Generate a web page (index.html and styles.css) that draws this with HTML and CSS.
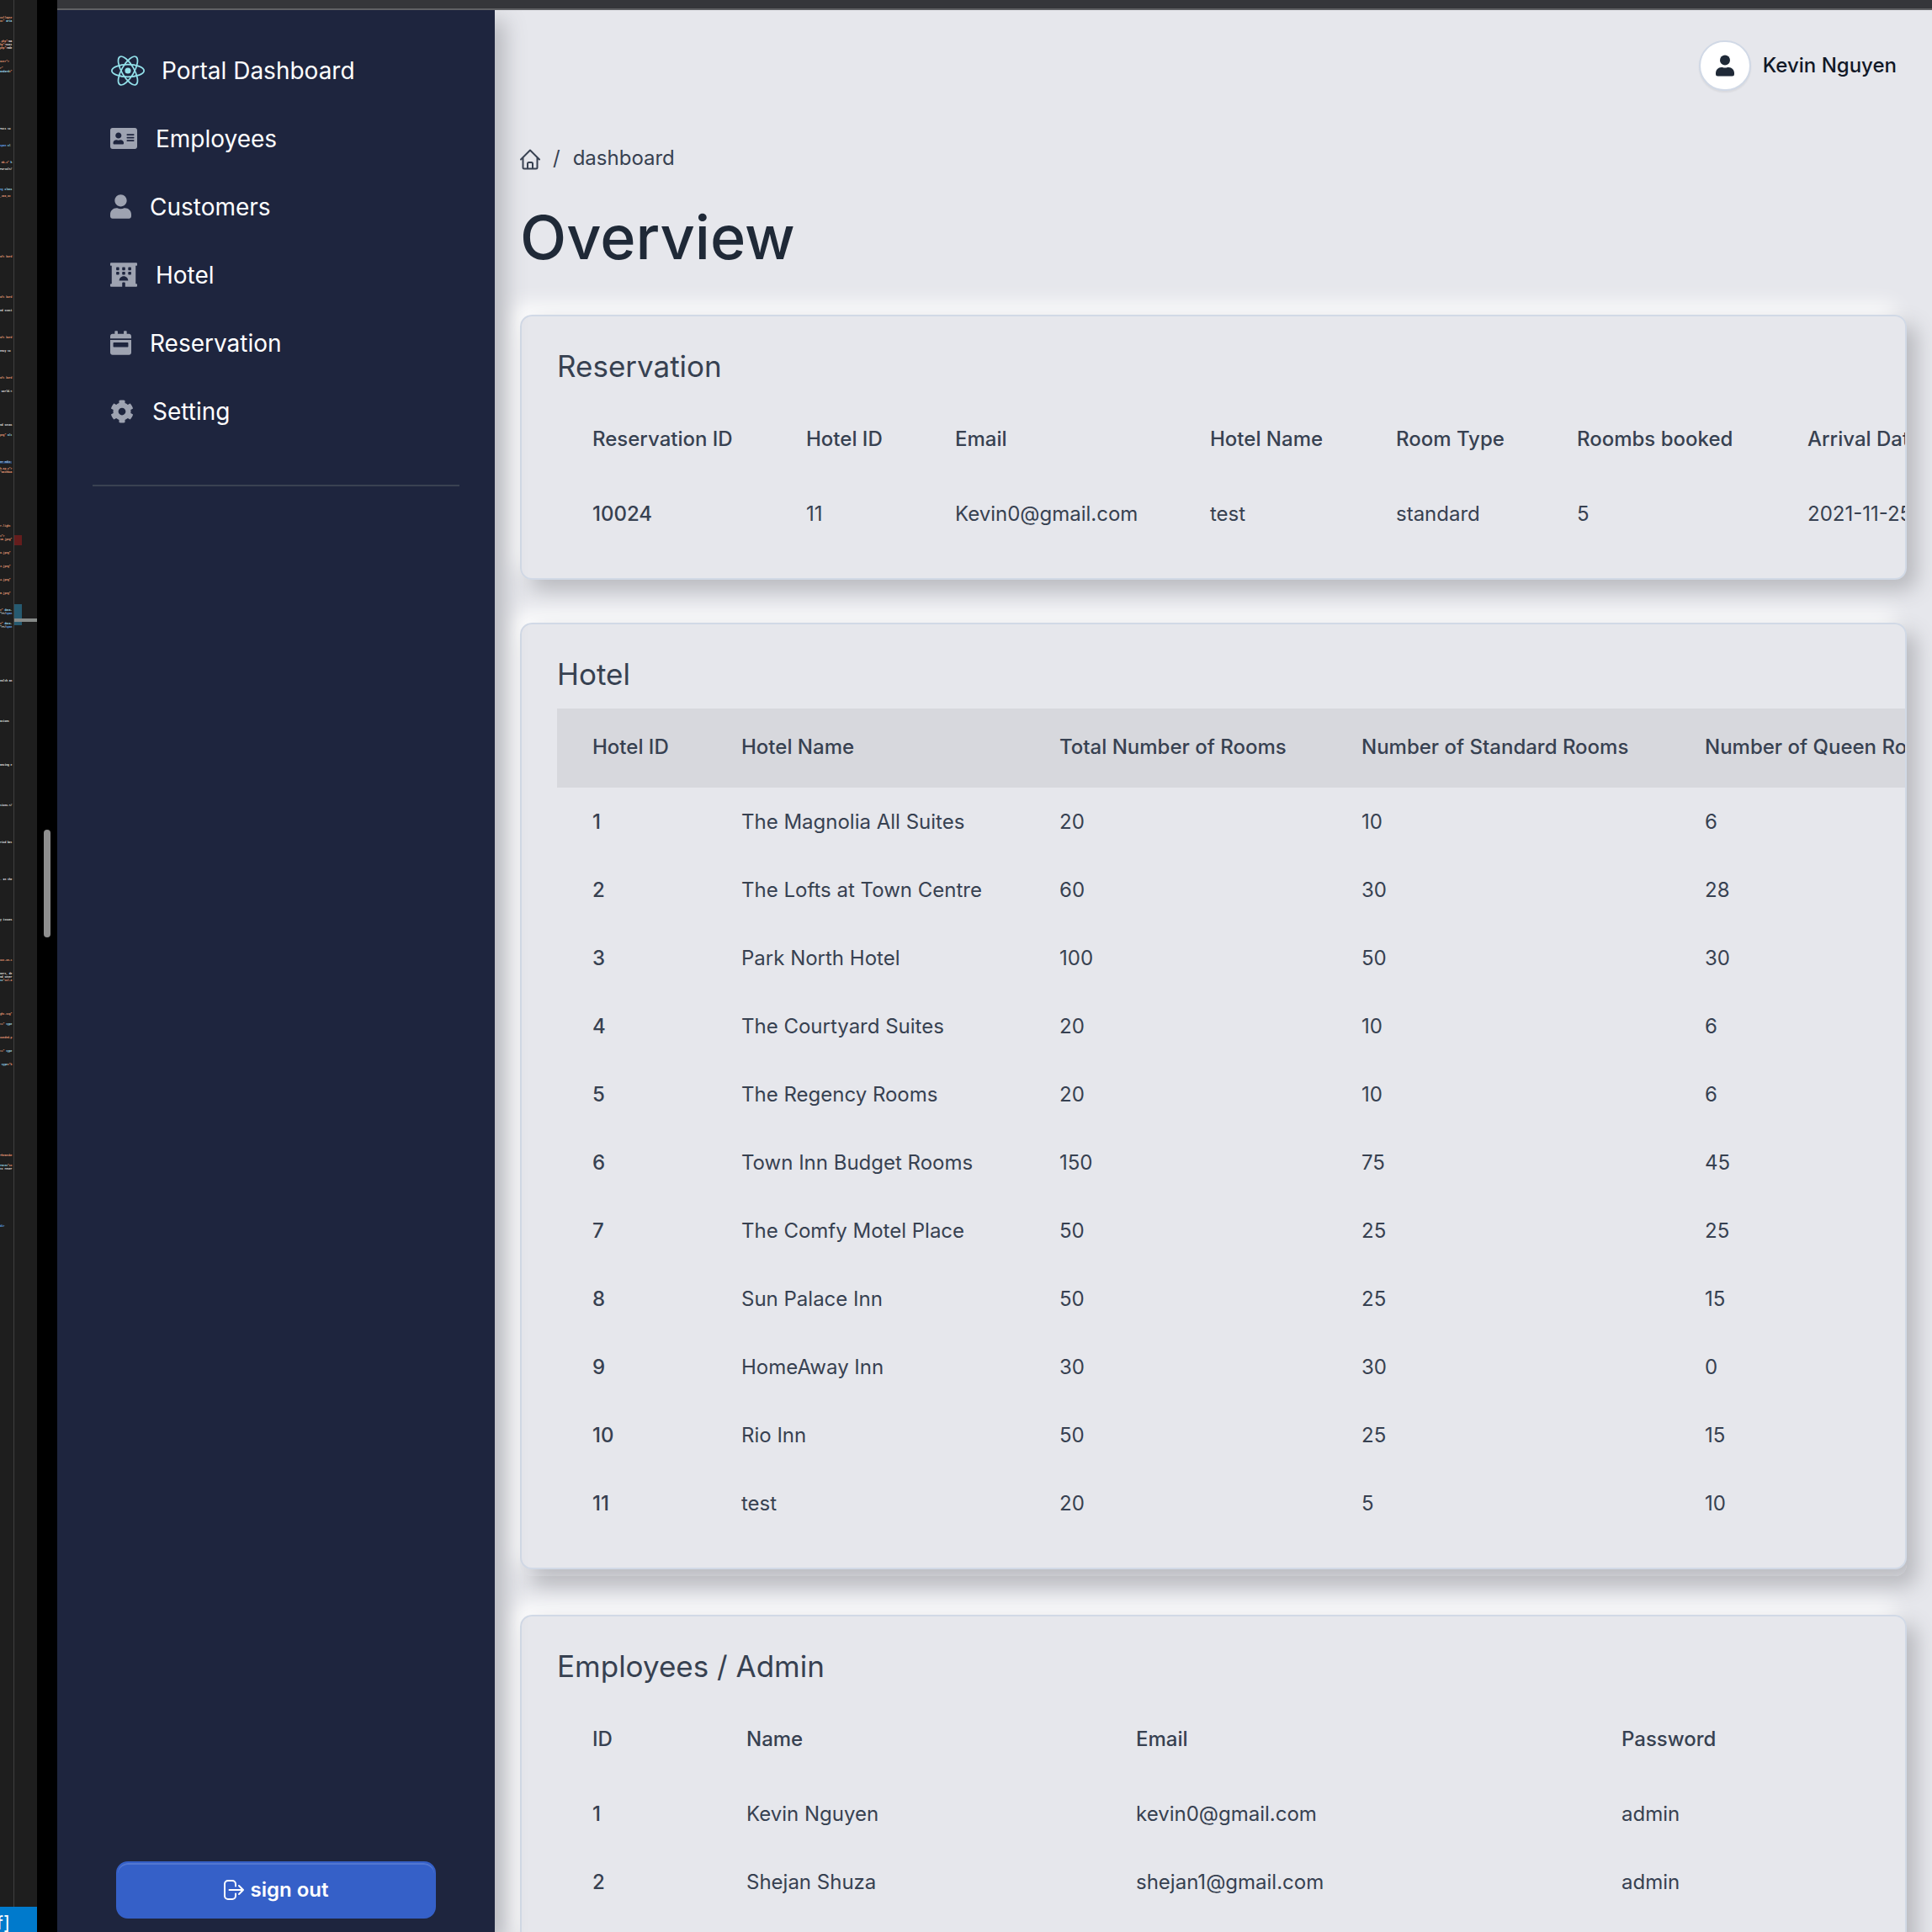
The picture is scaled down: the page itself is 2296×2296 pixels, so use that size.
FILE: index.html
```html
<!DOCTYPE html>
<html lang="en">
<head>
<meta charset="utf-8">
<title>Portal Dashboard</title>
<link rel="stylesheet" href="styles.css">
</head>
<body>
<aside class="editor" aria-hidden="true">
  <div class="editor-body">
    <pre class="minimap" id="minimap"></pre>
    <div class="ruler">
      <span class="mark mark-error"></span>
      <span class="mark mark-change"></span>
      <span class="mark mark-cursor"></span>
    </div>
  </div>
  <div class="statusbar">f]</div>
</aside>
<div class="divider"><span class="divider-grip"></span></div>
<div class="browser">
  <div class="browser-bar"></div>
  <div class="app">
    <nav class="sidebar">
      <ul class="nav">
        <li><a class="nav-link" href="#">
          <svg class="logo" width="40" height="36" viewBox="-11.5 -10.23 23 20.46"><circle r="2.05" fill="#93e1ea"/><g fill="none" stroke="#93e1ea"><ellipse rx="11" ry="4.2"/><ellipse rx="11" ry="4.2" transform="rotate(60)"/><ellipse rx="11" ry="4.2" transform="rotate(120)"/></g></svg>
          Portal Dashboard</a></li>
        <li><a class="nav-link" href="#">
          <svg class="icon" width="32" height="29" viewBox="0 0 576 512"><path d="M528 32H48C21.5 32 0 53.5 0 80v352c0 26.5 21.5 48 48 48h480c26.5 0 48-21.5 48-48V80c0-26.5-21.5-48-48-48zm-352 96c35.3 0 64 28.7 64 64s-28.7 64-64 64-64-28.7-64-64 28.7-64 64-64zm112 236.8c0 10.6-10 19.2-22.4 19.2H86.4C74 384 64 375.4 64 364.8v-19.2c0-31.8 30.1-57.6 67.2-57.6h5c12.3 5.1 25.7 8 39.8 8s27.6-2.9 39.8-8h5c37.1 0 67.2 25.8 67.2 57.6v19.2zM512 312c0 4.4-3.6 8-8 8H360c-4.4 0-8-3.6-8-8v-16c0-4.4 3.6-8 8-8h144c4.4 0 8 3.6 8 8v16zm0-64c0 4.4-3.6 8-8 8H360c-4.4 0-8-3.6-8-8v-16c0-4.4 3.6-8 8-8h144c4.4 0 8 3.6 8 8v16zm0-64c0 4.4-3.6 8-8 8H360c-4.4 0-8-3.6-8-8v-16c0-4.4 3.6-8 8-8h144c4.4 0 8 3.6 8 8v16z"/></svg>
          Employees</a></li>
        <li><a class="nav-link" href="#">
          <svg class="icon" width="25" height="29" viewBox="0 0 448 512"><path d="M224 256c70.7 0 128-57.3 128-128S294.7 0 224 0 96 57.3 96 128s57.3 128 128 128zm89.6 32h-16.7c-22.2 10.2-46.9 16-72.9 16s-50.6-5.8-72.9-16h-16.7C60.2 288 0 348.2 0 422.4V464c0 26.5 21.5 48 48 48h352c26.5 0 48-21.5 48-48v-41.6c0-74.2-60.2-134.4-134.4-134.4z"/></svg>
          Customers</a></li>
        <li><a class="nav-link" href="#">
          <svg class="icon" width="32" height="29" viewBox="0 0 576 512"><path d="M560 64c8.84 0 16-7.16 16-16V16c0-8.84-7.16-16-16-16H16C7.16 0 0 7.16 0 16v32c0 8.84 7.16 16 16 16h15.98v384H16c-8.84 0-16 7.16-16 16v32c0 8.84 7.16 16 16 16h240v-80c0-8.8 7.2-16 16-16h32c8.8 0 16 7.2 16 16v80h240c8.84 0 16-7.16 16-16v-32c0-8.84-7.16-16-16-16h-16V64h16zm-304 44.8c0-6.4 6.4-12.8 12.8-12.8h38.4c6.4 0 12.8 6.4 12.8 12.8v38.4c0 6.4-6.4 12.8-12.8 12.8h-38.4c-6.4 0-12.8-6.4-12.8-12.8v-38.4zm0 96c0-6.4 6.4-12.8 12.8-12.8h38.4c6.4 0 12.8 6.4 12.8 12.8v38.4c0 6.4-6.4 12.8-12.8 12.8h-38.4c-6.4 0-12.8-6.4-12.8-12.8v-38.4zm-128-96c0-6.4 6.4-12.8 12.8-12.8h38.4c6.4 0 12.8 6.4 12.8 12.8v38.4c0 6.4-6.4 12.8-12.8 12.8h-38.4c-6.4 0-12.8-6.4-12.8-12.8v-38.4zM179.2 256h-38.4c-6.4 0-12.8-6.4-12.8-12.8v-38.4c0-6.4 6.4-12.8 12.8-12.8h38.4c6.4 0 12.8 6.4 12.8 12.8v38.4c0 6.4-6.4 12.8-12.8 12.8zM192 384c0-53.02 42.98-96 96-96s96 42.98 96 96H192zm256-140.8c0 6.4-6.4 12.8-12.8 12.8h-38.4c-6.4 0-12.8-6.4-12.8-12.8v-38.4c0-6.4 6.4-12.8 12.8-12.8h38.4c6.4 0 12.8 6.4 12.8 12.8v38.4zm0-96c0 6.4-6.4 12.8-12.8 12.8h-38.4c-6.4 0-12.8-6.4-12.8-12.8v-38.4c0-6.4 6.4-12.8 12.8-12.8h38.4c6.4 0 12.8 6.4 12.8 12.8v38.4z"/></svg>
          Hotel</a></li>
        <li><a class="nav-link" href="#">
          <svg class="icon" width="25" height="29" viewBox="0 0 448 512"><path fill-rule="evenodd" d="M96 12c0-7 5-12 12-12h40c7 0 12 5 12 12v52h128V12c0-7 5-12 12-12h40c7 0 12 5 12 12v52h48c26 0 48 22 48 48v48H0v-48c0-26 22-48 48-48h48zM0 192h448v272c0 26-22 48-48 48H48c-26 0-48-22-48-48zm76 56c-7 0-12 5-12 12v72c0 7 5 12 12 12h296c7 0 12-5 12-12v-72c0-7-5-12-12-12z"/></svg>
          Reservation</a></li>
        <li><a class="nav-link" href="#">
          <svg class="icon" width="28" height="28" viewBox="0 0 512 512"><path d="M487.4 315.7l-42.6-24.6c4.3-23.2 4.3-47 0-70.2l42.6-24.6c4.9-2.8 7.1-8.6 5.5-14-11.1-35.6-30-67.8-54.7-94.6-3.8-4.1-10-5.1-14.8-2.3L380.8 110c-17.9-15.4-38.5-27.3-60.8-35.1V25.8c0-5.6-3.9-10.5-9.4-11.7-36.7-8.2-74.3-7.8-109.2 0-5.5 1.2-9.4 6.1-9.4 11.7V75c-22.2 7.9-42.8 19.8-60.8 35.1L88.7 85.5c-4.9-2.8-11-1.9-14.8 2.3-24.7 26.7-43.6 58.9-54.7 94.6-1.7 5.4.6 11.2 5.5 14L67.3 221c-4.3 23.2-4.3 47 0 70.2l-42.6 24.6c-4.9 2.8-7.1 8.6-5.5 14 11.1 35.6 30 67.8 54.7 94.6 3.8 4.1 10 5.1 14.8 2.3l42.6-24.6c17.9 15.4 38.5 27.3 60.8 35.1v49.2c0 5.6 3.9 10.5 9.4 11.7 36.7 8.2 74.3 7.8 109.2 0 5.5-1.2 9.4-6.1 9.4-11.7v-49.2c22.2-7.9 42.8-19.8 60.8-35.1l42.6 24.6c4.9 2.8 11 1.9 14.8-2.3 24.7-26.7 43.6-58.9 54.7-94.6 1.5-5.5-.7-11.3-5.6-14.1zM256 336c-44.1 0-80-35.9-80-80s35.9-80 80-80 80 35.9 80 80-35.9 80-80 80z"/></svg>
          Setting</a></li>
      </ul>
      <hr class="separator">
      <button class="signout" type="button">
        <svg width="24" height="24" viewBox="0 0 24 24" fill="none" stroke="currentColor" stroke-width="2" stroke-linecap="round" stroke-linejoin="round"><path d="M14 7.500V5a4 4 0 0 0-4-4H5a4 4 0 0 0-4 4v14a4 4 0 0 0 4 4h5a4 4 0 0 0 4-4v-2.500M6.500 12H23M18 7l5 5-5 5"/></svg>
        sign out</button>
    </nav>
    <main class="main">
      <header class="topbar">
        <a class="profile" href="#">
          <span class="avatar"><svg width="22" height="26" viewBox="0 0 22 26"><circle cx="11" cy="6.500" r="6"/><path d="M6.500 15h1.500q3 1 6 0h1.500A6.500 6.500 0 0 1 22 21.500V23a2.500 2.500 0 0 1-2.500 2.500h-17A2.500 2.500 0 0 1 0 23v-1.500A6.500 6.500 0 0 1 6.500 15z"/></svg></span>
          Kevin Nguyen</a>
      </header>
      <nav class="breadcrumb">
        <a class="crumb-home" href="#" aria-label="Home"><svg width="24" height="26" viewBox="0 0 24 26" fill="none" stroke="currentColor" stroke-width="2" stroke-linecap="round" stroke-linejoin="round"><path d="M1 13.500 12 2.500l11 11M3.500 11.500V23a1.500 1.500 0 0 0 1.500 1.500h14a1.500 1.500 0 0 0 1.500-1.500V11.500M9 24v-5.500a1.500 1.500 0 0 1 1.500-1.500h3a1.500 1.500 0 0 1 1.500 1.500V24"/></svg></a>
        <span>/</span>
        <a href="#">dashboard</a>
      </nav>
      <h1 class="page-title">Overview</h1>

      <section class="panel">
        <div class="card">
          <h2 class="card-title">Reservation</h2>
          <table class="data data-reservation">
            <thead><tr><th>Reservation ID</th><th>Hotel ID</th><th>Email</th><th>Hotel Name</th><th>Room Type</th><th>Roombs booked</th><th>Arrival Date</th></tr></thead>
            <tbody><tr><th>10024</th><td>11</td><td>Kevin0@gmail.com</td><td>test</td><td>standard</td><td>5</td><td>2021-11-25</td></tr></tbody>
          </table>
        </div>
      </section>

      <section class="panel panel-hotel">
        <div class="card">
          <h2 class="card-title">Hotel</h2>
          <table class="data data-hotel">
            <thead><tr><th>Hotel ID</th><th>Hotel Name</th><th>Total Number of Rooms</th><th>Number of Standard Rooms</th><th>Number of Queen Rooms</th></tr></thead>
            <tbody>
              <tr><th>1</th><td>The Magnolia All Suites</td><td>20</td><td>10</td><td>6</td></tr>
              <tr><th>2</th><td>The Lofts at Town Centre</td><td>60</td><td>30</td><td>28</td></tr>
              <tr><th>3</th><td>Park North Hotel</td><td>100</td><td>50</td><td>30</td></tr>
              <tr><th>4</th><td>The Courtyard Suites</td><td>20</td><td>10</td><td>6</td></tr>
              <tr><th>5</th><td>The Regency Rooms</td><td>20</td><td>10</td><td>6</td></tr>
              <tr><th>6</th><td>Town Inn Budget Rooms</td><td>150</td><td>75</td><td>45</td></tr>
              <tr><th>7</th><td>The Comfy Motel Place</td><td>50</td><td>25</td><td>25</td></tr>
              <tr><th>8</th><td>Sun Palace Inn</td><td>50</td><td>25</td><td>15</td></tr>
              <tr><th>9</th><td>HomeAway Inn</td><td>30</td><td>30</td><td>0</td></tr>
              <tr><th>10</th><td>Rio Inn</td><td>50</td><td>25</td><td>15</td></tr>
              <tr><th>11</th><td>test</td><td>20</td><td>5</td><td>10</td></tr>
            </tbody>
          </table>
        </div>
      </section>

      <section class="panel">
        <div class="card">
          <h2 class="card-title">Employees / Admin</h2>
          <table class="data data-people">
            <thead><tr><th>ID</th><th>Name</th><th>Email</th><th>Password</th></tr></thead>
            <tbody>
              <tr><th>1</th><td>Kevin Nguyen</td><td>kevin0@gmail.com</td><td>admin</td></tr>
              <tr><th>2</th><td>Shejan Shuza</td><td>shejan1@gmail.com</td><td>admin</td></tr>
            </tbody>
          </table>
        </div>
      </section>
    </main>
  </div>
</div>
<script src="minimap.js"></script>
</body>
</html>
```

FILE: styles.css
```css
* { box-sizing: border-box; }

:root {
  --page: #e6e7ec;
  --ink: #374151;
  --border: #d1d9e6;
  --raised: 12px 12px 24px #b8b9be, -12px -12px 24px #fff;
}

body {
  margin: 0;
  display: flex;
  height: 100vh;
  overflow: hidden;
  background: #000;
  color: var(--ink);
  font: 24px/36px Inter, "Liberation Sans", sans-serif;
}

a { color: inherit; text-decoration: none; }

/* Code editor strip */
.editor {
  flex: none;
  width: 44px;
  display: flex;
  flex-direction: column;
  background: #1e1e1e;
}
.editor-body { flex: 1; display: flex; min-height: 0; }
.minimap {
  flex: none;
  width: 16px;
  margin: 0;
  overflow: hidden;
  color: #f0f0f0;
  font: bold 3px/4px "Liberation Mono", monospace;
}
.tok-s { color: #f0a07c; }
.tok-k { color: #68aef8; }
.tok-a { color: #a8e4ff; }
.tok-h { color: #a8ccf0; background: #264064; }
.ruler { position: relative; flex: 1; border-left: 1px solid #404040; }
.mark { position: absolute; left: 0; width: 9px; }
.mark-error { top: 636px; height: 12px; background: #651d1d; }
.mark-change { top: 718px; height: 25px; background: #265a70; }
.mark-cursor { top: 735px; width: 27px; height: 4px; background: #868a88; }
.statusbar {
  display: flex;
  justify-content: flex-end;
  height: 30px;
  padding-right: 32px;
  overflow: hidden;
  background: #007acc;
  color: #fff;
  font-size: 22px;
  line-height: 38px;
}

.divider {
  flex: none;
  width: 24px;
  display: flex;
  align-items: center;
  justify-content: center;
  padding-bottom: 196px;
}
.divider-grip { width: 8px; height: 128px; border-radius: 4px; background: #8f8f8f; }

/* Browser window */
.browser { flex: 1; min-width: 0; display: flex; flex-direction: column; }
.browser-bar { flex: none; height: 12px; background: #35363a; border-bottom: 2px solid #606164; }
.app { flex: 1; min-height: 0; display: flex; background: var(--page); overflow: hidden; }

/* Sidebar */
.sidebar {
  position: relative;
  z-index: 1;
  flex: none;
  width: 520px;
  display: flex;
  flex-direction: column;
  padding: 31px 42px 16px;
  background: #1e253e;
  box-shadow: 12px 12px 24px #b8b9be;
  color: #fff;
}
.nav { list-style: none; margin: 0; padding: 0 21px; }
.nav-link {
  display: flex;
  align-items: center;
  gap: 22px;
  height: 81px;
  font-size: 28px;
}
.logo { margin: 0 -2px 0 1px; }
.icon { fill: #9ea3b1; }
.separator { width: 100%; margin: 47px 0 0; border: 0; border-top: 2px solid #3a4252; }
.signout {
  display: flex;
  align-items: center;
  justify-content: center;
  gap: 8px;
  height: 68px;
  margin: auto 28px 0;
  border: 2px solid #3560c8;
  border-radius: 14px;
  background: #3560c8;
  box-shadow: inset 0 2px 0 rgba(255, 255, 255, .15);
  color: #fff;
  font: 600 24px/36px Inter, "Liberation Sans", sans-serif;
}

/* Content */
.main { flex: 1; min-width: 0; padding: 36px 30px 0; overflow: hidden; }
.topbar { display: flex; justify-content: flex-end; }
.profile {
  display: flex;
  align-items: center;
  gap: 14px;
  padding-right: 12px;
  color: #111827;
  font-weight: 500;
}
.avatar {
  display: flex;
  align-items: center;
  justify-content: center;
  width: 62px;
  height: 60px;
  border: 2px solid var(--border);
  border-radius: 30px;
  background: #fff;
  box-shadow: 0 2px 2px rgba(0, 0, 0, .06);
  fill: #1f2937;
}
.breadcrumb { display: flex; align-items: center; gap: 15px; margin-top: 62px; }
.crumb-home { display: flex; padding-top: 2px; }
.page-title {
  margin: 40px 0 56px;
  color: #1f2937;
  font-size: 72px;
  line-height: 72px;
  font-weight: 500;
}

.panel {
  margin-bottom: 46px;
  border-radius: 14px;
  box-shadow: var(--raised);
  overflow: hidden;
}
.panel-hotel { margin-top: 51px; padding-bottom: 8px; }
.card {
  padding: 39px 42px 36px;
  border: 2px solid var(--border);
  border-radius: 14px;
  background: var(--page);
  box-shadow: var(--raised);
  overflow: hidden;
}
.card-title { margin: 0 0 21px; font-size: 35px; line-height: 40px; font-weight: 400; }

/* Tables keep their column widths and are clipped by the card */
.data {
  width: 100%;
  border-collapse: collapse;
  table-layout: fixed;
  white-space: nowrap;
  text-align: left;
}
.data th, .data td { height: 81px; padding: 0 42px; }
.data th { font-weight: 500; }
.data thead th { height: 94px; padding-bottom: 2px; }

.data-reservation { width: 1740px; }
.data-reservation th:nth-child(1) { width: 254px; }
.data-reservation th:nth-child(2) { width: 177px; }
.data-reservation th:nth-child(3) { width: 303px; }
.data-reservation th:nth-child(4) { width: 221px; }
.data-reservation th:nth-child(5) { width: 215px; }
.data-reservation th:nth-child(6) { width: 274px; }

.data-hotel { width: 1740px; }
.data-hotel thead { background: #d7d8dd; }
.data-hotel th:nth-child(1) { width: 177px; }
.data-hotel th:nth-child(2) { width: 378px; }
.data-hotel th:nth-child(3) { width: 359px; }
.data-hotel th:nth-child(4) { width: 408px; }

.data-people th:nth-child(1) { width: 183px; }
.data-people th:nth-child(2) { width: 463px; }
.data-people th:nth-child(3) { width: 577px; }
```

FILE: minimap.js
```js
// Minimap source: line number -> [token class, text] runs.
const lines = {
  5: [['s', 'collapse']], 6: [['s', 'at" '], ['a', 'aria']],
  12: [['s', '.php">'], ['', 'Da']], 13: [['s', 'hp">'], ['', 'Cust']], 14: [['s', 'php">'], ['', 'Ede']],
  18: [['s', 'aver">']], 20: [['s', 'r"']], 21: [['a', 'andard'], ['s', '="']],
  38: [['', 'Tots to']], 43: [['k', 'span '], ['a', 'cl']], 48: [['s', ' mb-3" '], ['a', 'h']],
  50: [['', 'Portal</']], 56: [['k', 'ng '], ['a', 'class']], 58: [['s', ',300,0x']],
  76: [['s', 'aft bord']], 88: [['s', 'aft bord']], 92: [['', 'ed stati']],
  100: [['s', 'aft bord']], 104: [['', 'ency to']], 112: [['s', 'aft bord']], 116: [['', ' world.<']],
  126: [['', 'nd setas']], 129: [['s', 'png" '], ['a', 'alt']], 137: [['h', 'er edit ']],
  139: [['s', 'b-ap-2">']], 140: [['s', '"Dashboa']],
  156: [['s', 'r-light']], 159: [['s', 'v">']], 160: [['s', '15.jpeg"']],
  164: [['s', '0.jpeg"']], 168: [['s', '3.jpeg"']], 172: [['s', '4.jpeg"']], 176: [['s', '5.jpeg"']],
  181: [['s', 'e" '], ['a', 'data-']], 182: [['', '"></'], ['k', 'span']],
  185: [['s', 'e" '], ['a', 'data-']], 186: [['', '"></'], ['k', 'span']],
  202: [['', 'ealth an']], 214: [['', 'ations']], 227: [['', 'ancing e']], 239: [['', 'tions.</']],
  250: [['', 'riod bet']], 261: [['', '. In the']], 273: [['', 'y issues']],
  285: [['s', 'out-on-1']], 289: [['', 'ners, de']], 290: [['', 'nd sever']], 291: [['a', 's='], ['s', '"col-6']],
  301: [['s', 'ght.svg"']], 304: [['s', 't1" '], ['a', 'type']], 308: [['s', 'ounded-p']],
  312: [['s', 't1" '], ['a', 'type']], 316: [['a', ' type'], ['s', '="b']],
  343: [['s', 'Themesbe']], 346: [['a', 'rate='], ['s', '"co']], 347: [['', 'ts reser']], 364: [['k', 'di>']]
};

const map = document.getElementById('minimap');
const last = Math.max(...Object.keys(lines).map(Number));
for (let row = 0; row <= last; row++) {
  for (const [kind, text] of lines[row] || []) {
    const run = document.createElement('span');
    if (kind) run.className = 'tok-' + kind;
    run.textContent = text;
    map.append(run);
  }
  map.append('\n');
}
```
